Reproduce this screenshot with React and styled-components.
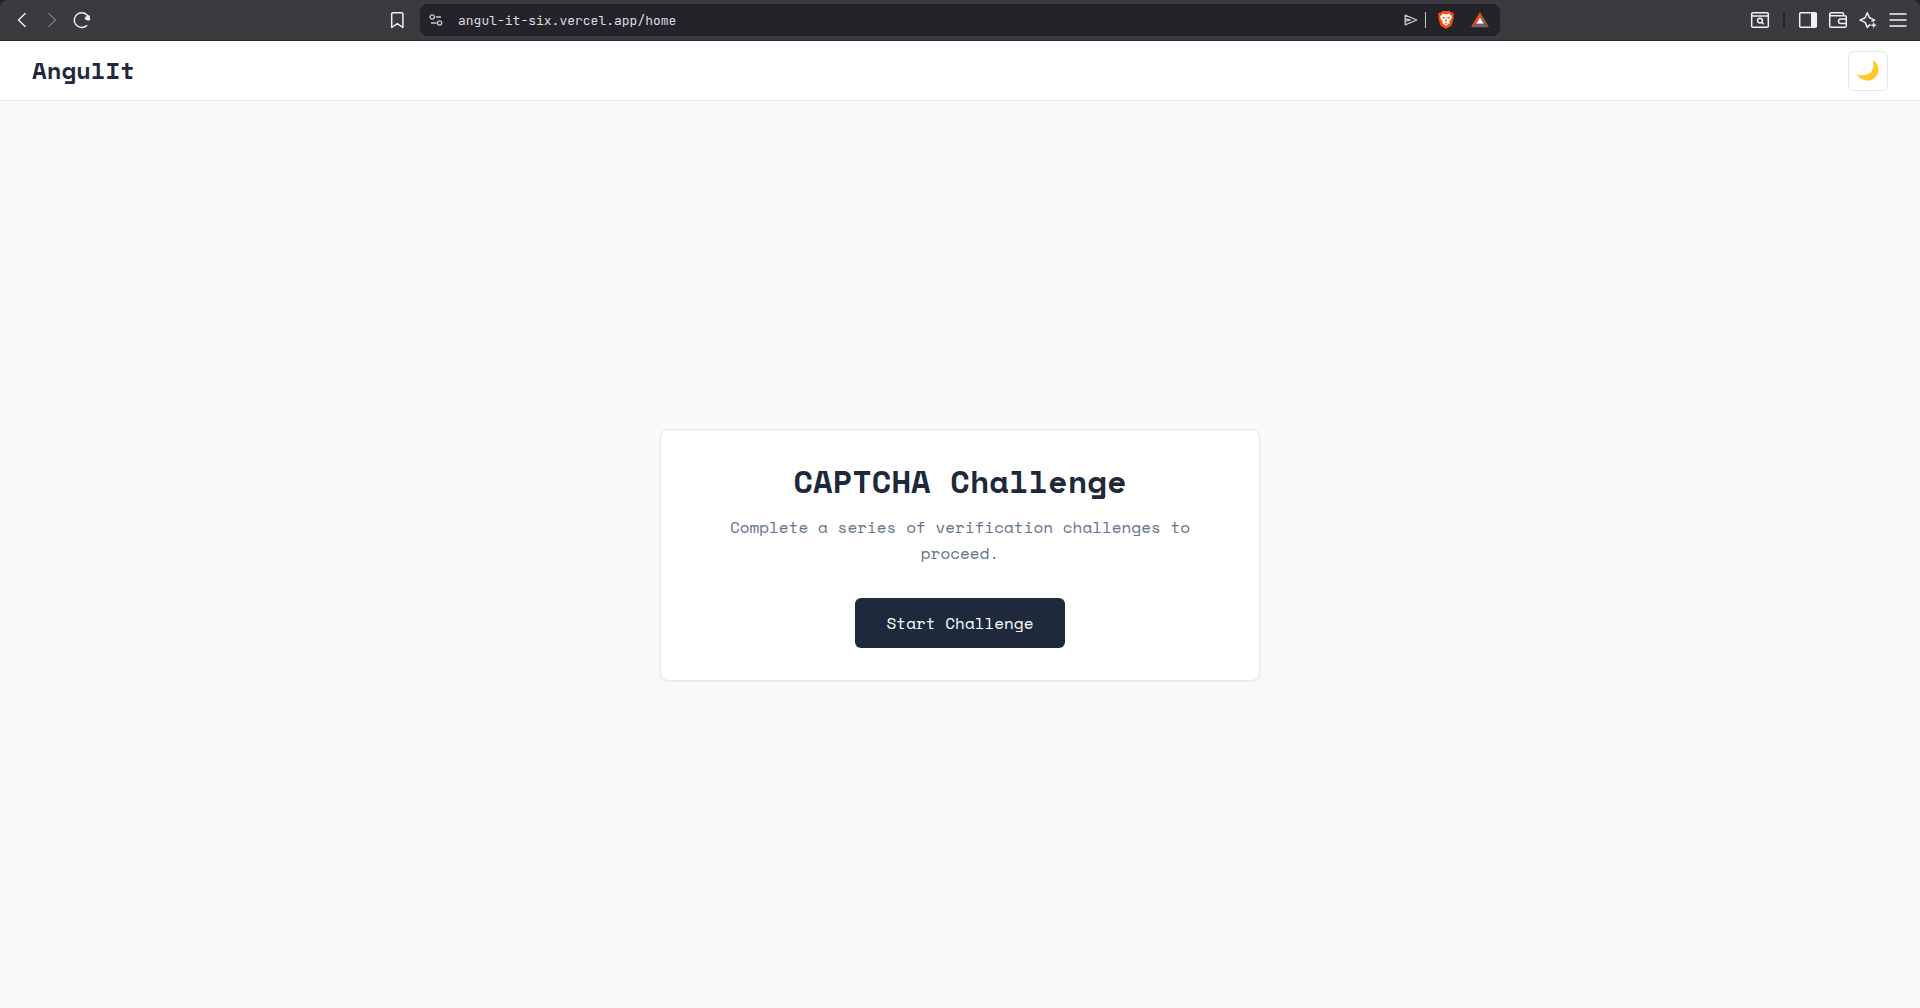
import React from "react";
import styled, { createGlobalStyle } from "styled-components";

const GlobalStyle = createGlobalStyle`
  *, *::before, *::after { box-sizing: border-box; }
  body {
    margin: 0;
    background: #f8fafc;
    color: #1e293b;
    font-family: "Space Mono", "Liberation Mono", monospace;
  }
  button, input { font-family: inherit; }
`;

const Page = styled.div`
  display: flex;
  flex-direction: column;
  min-height: 100vh;
`;

const ToolbarFrame = styled.div`
  background: #242329;
`;

const Toolbar = styled.div`
  display: grid;
  grid-template-columns: 1fr minmax(0, 1080px) 1fr;
  align-items: center;
  padding: 4px 0;
  border-bottom: 1px solid #29282d;
  border-radius: 8px 8px 0 0;
  background: #3b3a3f;
`;

const ToolGroup = styled.div`
  display: flex;
  align-items: center;
  justify-content: ${(p) => p.$justify || "flex-start"};
  gap: 2px;
  padding: 0 8px;
`;

const Spacer = styled.div`
  flex: 1;
`;

const IconButton = styled.button`
  display: flex;
  align-items: center;
  justify-content: center;
  width: 28px;
  height: 28px;
  padding: 0;
  border: 0;
  background: transparent;
  color: ${(p) => p.$color || "#f0eff6"};
  cursor: pointer;

  svg { display: block; flex: none; }
`;

const Divider = styled.span`
  width: ${(p) => p.$width}px;
  height: 16px;
  margin: 0 ${(p) => p.$gap}px;
  background: ${(p) => p.$color};
`;

const AddressBar = styled.div`
  display: flex;
  align-items: center;
  height: 32px;
  padding: 0 6px 0 2px;
  border-radius: 8px;
  background: #242329;
`;

const AddressInput = styled.input`
  flex: 1;
  min-width: 0;
  height: 28px;
  padding: 0 8px;
  border: 0;
  outline: 0;
  background: transparent;
  color: #dedde6;
  font-family: "JetBrains Mono", "Liberation Mono", monospace;
  font-size: 13px;
`;

const Shields = styled.div`
  display: flex;
  align-items: center;
  gap: 6px;
`;

const Header = styled.header`
  display: flex;
  align-items: center;
  justify-content: space-between;
  padding: 10px 32px 9px;
  border-bottom: 1px solid #e2e8f0;
  background: #ffffff;
`;

const Brand = styled.span`
  padding-bottom: 2px;
  font-size: 24px;
  line-height: 38px;
  font-weight: 700;
`;

const ThemeToggle = styled.button`
  display: flex;
  align-items: center;
  justify-content: center;
  width: 40px;
  height: 40px;
  padding: 0;
  border: 1px solid #e2e8f0;
  border-radius: 6px;
  background: #ffffff;
  cursor: pointer;
`;

const Main = styled.main`
  display: flex;
  flex: 1;
  align-items: center;
  justify-content: center;
  padding: 32px;
`;

const Card = styled.section`
  width: 100%;
  max-width: 600px;
  padding: 32px;
  border: 1px solid #e2e8f0;
  border-radius: 8px;
  background: #ffffff;
  box-shadow: 0 1px 3px rgba(0, 0, 0, 0.05);
  text-align: center;
`;

const Title = styled.h1`
  margin: 0 0 14px;
  font-size: 32px;
  line-height: 38px;
  font-weight: 700;
`;

const Description = styled.p`
  margin: 0 0 32px;
  padding: 0 32px;
  color: #64748b;
  font-size: 16px;
  line-height: 26px;
`;

const StartButton = styled.button`
  min-width: 210px;
  height: 50px;
  padding: 0 30px;
  border: 0;
  border-radius: 6px;
  background: #1e293b;
  color: #ffffff;
  font-size: 16px;
  line-height: 24px;
  vertical-align: top;
  cursor: pointer;
`;

function Icon({ size = 20, width = 1.5, children }) {
  return (
    <svg width={size} height={size} viewBox="0 0 20 20" fill="none" stroke="currentColor"
      strokeWidth={width} strokeLinejoin="round" aria-hidden="true">
      {children}
    </svg>
  );
}

const BackIcon = () => <Icon><path d="M13.5 3.2 6.5 10l7 6.8" /></Icon>;
const ForwardIcon = () => <Icon><path d="m6.5 3.2 7 6.8-7 6.8" /></Icon>;

const ReloadIcon = () => (
  <Icon>
    <path d="M15.1 15.2a7.4 7.4 0 1 1 1.6-7.4" />
    <path d="m17.6 5.2.7 4.4-1.8 1.2-3.5-1.2-.3-2.2 2.7-1.8Z" fill="currentColor" stroke="none" />
  </Icon>
);

const BookmarkIcon = () => (
  <Icon><path d="M3.7 17.5V4A1.3 1.3 0 0 1 5 2.7h8.6A1.3 1.3 0 0 1 14.9 4v13.5L9.3 13.7Z" /></Icon>
);

const TuneIcon = () => (
  <Icon width={1.3}>
    <circle cx="6.2" cy="7" r="2.1" />
    <path d="M9.8 7H15M5 13h5.6" />
    <circle cx="13.6" cy="13" r="2.1" />
  </Icon>
);

const SendIcon = () => (
  <Icon width={1.3}><path d="M4.2 5.2 15.8 10 4.2 14.8ZM4.2 8.8l5 1.2-5 1.2" /></Icon>
);

const BraveIcon = () => (
  <svg width="18" height="20" viewBox="0 0 18 20" aria-hidden="true">
    <path d="M5.3 1h7.4l1.5 1.5 1.6-.1 1.2 2.2-.6 1.3.4 1.5-2.2 8L9 19l-5.6-3.6-2.2-8 .4-1.5L1 4.6l1.2-2.2 1.6.1Z" fill="#fb4a12" />
    <path d="m9 4.4 2.8-.9 3 2.8-.5 2.5-1.9 2.6.3 1.7L9 16.1l-3.7-3 .3-1.7-1.9-2.6-.5-2.5 3-2.8Z" fill="#fff" />
    <path d="m4.7 6.7 2.9.5-.7 1.7Zm8.6 0-2.9.5.7 1.7ZM8.7 7h.6l.2 3.4.9.6L9 12.1 7.6 11l.9-.6ZM7.4 13.4l1.6-.5 1.6.5-1.6 1Z" fill="#fb4a12" />
  </svg>
);

const RewardsIcon = () => (
  <svg width="20" height="20" viewBox="0 0 20 20" aria-hidden="true">
    <path d="M10 2 1 17.2l5.6-3.4L10 7.6Z" fill="#ff4a12" />
    <path d="m10 2 9 15.2-5.6-3.4L10 7.6Z" fill="#a35c43" />
    <path d="m1 17.2 5.6-3.4h6.8l5.6 3.4Z" fill="#666878" />
    <path d="m10 7.6 3.6 6.2H6.4Z" fill="#fff" />
  </svg>
);

const SearchTabIcon = () => (
  <Icon>
    <rect x="1.7" y="2.7" width="16.6" height="14.6" rx="1.3" />
    <path d="M2 6h16" />
    <circle cx="10" cy="10.6" r="2.4" />
    <path d="m11.7 12.3 2 2" />
  </Icon>
);

const SidebarIcon = () => (
  <Icon>
    <rect x="1.7" y="2.7" width="16.6" height="14.6" rx="1" />
    <path d="M13 3h5v14h-5Z" fill="currentColor" stroke="none" />
  </Icon>
);

const WalletIcon = () => (
  <Icon>
    <path d="M15.5 5.7V4a1.3 1.3 0 0 0-1.3-1.3H3.2A1.5 1.5 0 0 0 1.7 4.2v11.6a1.5 1.5 0 0 0 1.5 1.5h13.6a1.5 1.5 0 0 0 1.5-1.5V7.2a1.5 1.5 0 0 0-1.5-1.5H3.2a1.5 1.5 0 0 1-1.5-1.5" />
    <path d="M18.3 9h-5.5a2.3 2.3 0 0 0 0 4.6h5.5" />
  </Icon>
);

const SparkleIcon = () => (
  <Icon>
    <path d="M12.5 14.5 11.1 15.3 9.3 17.5 7.2 12.4 2 10.1 7.2 7.8 9.3 2.7 11.5 7.8 16.7 10.1 13.5 11.5" />
    <path d="M15.7 11.9 16.6 14.3 19 15.2 16.6 16.1 15.7 18.5 14.8 16.1 12.4 15.2 14.8 14.3Z" fill="currentColor" stroke="none" />
  </Icon>
);

const MenuIcon = () => (
  <Icon width={2}><path d="M1.5 4h17M1.5 10h17M1.5 16h17" /></Icon>
);

const MoonIcon = () => (
  <svg width="24" height="24" viewBox="0 0 24 24" aria-hidden="true">
    <path d="M16.7 1c4.1 2.1 6.4 6.5 5.8 11-.7 5.9-6 10.2-11.9 9.6-4-.4-7.9-2.6-9.9-6 4.8 1.4 10.4.9 13.7-2 3.4-3 3.9-7.6 2.3-12.6Z" fill="#ffca28" />
  </svg>
);

export default function App() {
  return (
    <Page>
      <GlobalStyle />
      <ToolbarFrame>
        <Toolbar>
          <ToolGroup>
            <IconButton aria-label="Back"><BackIcon /></IconButton>
            <IconButton aria-label="Forward" $color="#77727f"><ForwardIcon /></IconButton>
            <IconButton aria-label="Reload"><ReloadIcon /></IconButton>
            <Spacer />
            <IconButton aria-label="Bookmark this page"><BookmarkIcon /></IconButton>
          </ToolGroup>
          <AddressBar>
            <IconButton aria-label="Site information" $color="#c9c7d1"><TuneIcon /></IconButton>
            <AddressInput type="text" aria-label="Address" defaultValue="angul-it-six.vercel.app/home" spellCheck={false} />
            <IconButton aria-label="Share" $color="#c9c7d1"><SendIcon /></IconButton>
            <Shields>
              <Divider $width={1} $gap={0} $color="#c9c7d1" />
              <IconButton aria-label="Shields"><BraveIcon /></IconButton>
              <IconButton aria-label="Rewards"><RewardsIcon /></IconButton>
            </Shields>
          </AddressBar>
          <ToolGroup $justify="flex-end">
            <IconButton aria-label="Search tabs"><SearchTabIcon /></IconButton>
            <Divider $width={2} $gap={7} $color="#242329" />
            <IconButton aria-label="Sidebar"><SidebarIcon /></IconButton>
            <IconButton aria-label="Wallet"><WalletIcon /></IconButton>
            <IconButton aria-label="Assistant"><SparkleIcon /></IconButton>
            <IconButton aria-label="Menu" $color="#c4c8c5"><MenuIcon /></IconButton>
          </ToolGroup>
        </Toolbar>
      </ToolbarFrame>
      <Header>
        <Brand>AngulIt</Brand>
        <ThemeToggle aria-label="Switch to dark theme"><MoonIcon /></ThemeToggle>
      </Header>
      <Main>
        <Card>
          <Title>CAPTCHA Challenge</Title>
          <Description>Complete a series of verification challenges to proceed.</Description>
          <StartButton>Start Challenge</StartButton>
        </Card>
      </Main>
    </Page>
  );
}
